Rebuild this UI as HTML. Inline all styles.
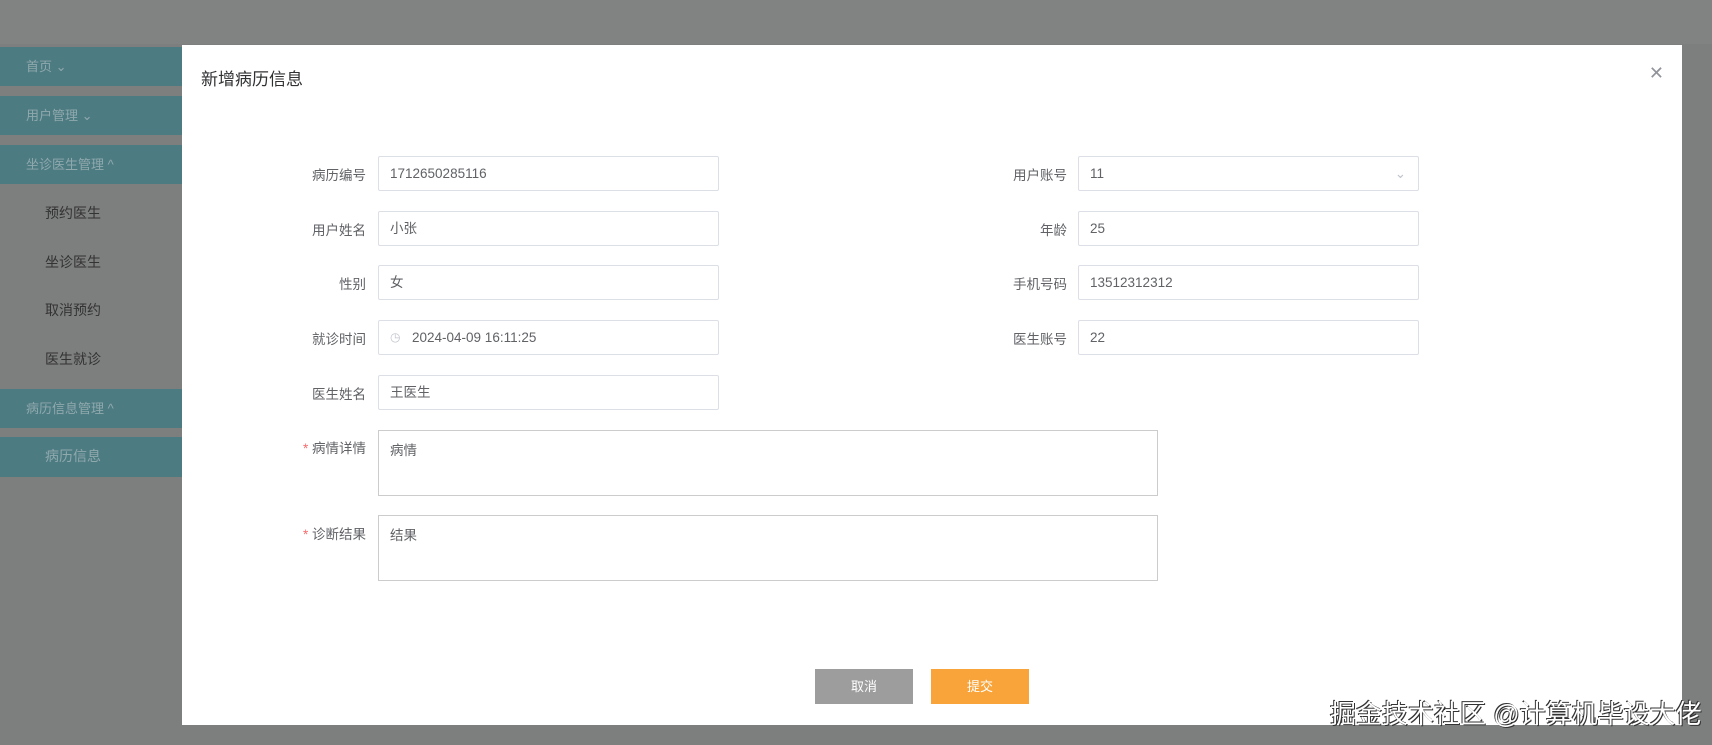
<!DOCTYPE html>
<html><head><meta charset="utf-8"><style>
*{box-sizing:border-box;margin:0;padding:0}
body{width:1712px;height:745px;overflow:hidden;background:#7d7e7e;font-family:"Liberation Sans","Noto Sans CJK SC",sans-serif;position:relative}
.top{position:absolute;left:0;top:0;width:1712px;height:44px;background:#818282}
.sb{position:absolute;left:0;top:44px;width:190px;height:701px;background:#7d7e7e}
.hd{position:absolute;left:0;width:190px;height:39px;background:#4d7b82;color:#8fa9ad;font-size:13px;line-height:39px;padding-left:26px}
.it{position:absolute;left:45px;color:#333;font-size:14px}
.modal{position:absolute;left:182px;top:45px;width:1500px;height:680px;background:#fff}
.title{position:absolute;left:19px;top:20px;font-size:17px;color:#303133}
.x{position:absolute;right:18px;top:18px;font-size:18px;color:#909399}
.lb{position:absolute;font-size:13.5px;color:#606266;text-align:right;width:120px}
.in{position:absolute;width:341px;height:35px;border:1px solid #dcdfe6;border-radius:2px;font-size:13.5px;color:#606266;padding-left:11px;line-height:33px}
.ta{position:absolute;left:196px;width:780px;height:66px;border:1px solid #ccc;font-size:13.5px;color:#606266;padding:8px 11px}
.btn{position:absolute;top:624px;width:98px;height:35px;color:#fff;font-size:13px;text-align:center;line-height:35px}
.wm{position:absolute;left:1330px;top:694px;font-size:26px;color:#fff;text-shadow:1px 1px 0 #333,-1px -1px 0 #333;white-space:nowrap}
</style></head><body>
<div class="top"></div>
<div class="sb">
<div class="hd" style="top:3px">首页 ⌄</div>
<div class="hd" style="top:52px">用户管理 ⌄</div>
<div class="hd" style="top:101px">坐诊医生管理 ^</div>
<div class="it" style="top:159px">预约医生</div>
<div class="it" style="top:208px">坐诊医生</div>
<div class="it" style="top:256px">取消预约</div>
<div class="it" style="top:305px">医生就诊</div>
<div class="hd" style="top:345px">病历信息管理 ^</div>
<div class="hd" style="top:393px;padding-left:45px;font-size:14px;height:40px">病历信息</div>
</div>
<div class="modal">
<div class="title">新增病历信息</div>
<div class="x">✕</div>
<div class="lb" style="left:64px;top:119px">病历编号</div><div class="in" style="left:196px;top:111px">1712650285116</div>
<div class="lb" style="left:64px;top:174px">用户姓名</div><div class="in" style="left:196px;top:166px">小张</div>
<div class="lb" style="left:64px;top:228px">性别</div><div class="in" style="left:196px;top:220px">女</div>
<div class="lb" style="left:64px;top:283px">就诊时间</div><div class="in" style="left:196px;top:275px;padding-left:33px;color:#606266">2024-04-09 16:11:25<span style="position:absolute;left:11px;color:#c0c4cc;font-size:12px">◷</span></div>
<div class="lb" style="left:64px;top:338px">医生姓名</div><div class="in" style="left:196px;top:330px">王医生</div>
<div class="lb" style="left:765px;top:119px">用户账号</div><div class="in" style="left:896px;top:111px">11<span style="position:absolute;right:12px;color:#c0c4cc">⌄</span></div>
<div class="lb" style="left:765px;top:174px">年龄</div><div class="in" style="left:896px;top:166px">25</div>
<div class="lb" style="left:765px;top:228px">手机号码</div><div class="in" style="left:896px;top:220px">13512312312</div>
<div class="lb" style="left:765px;top:283px">医生账号</div><div class="in" style="left:896px;top:275px">22</div>
<div class="lb" style="left:64px;top:392px"><span style="color:#f56c6c">* </span>病情详情</div><div class="ta" style="top:385px">病情</div>
<div class="lb" style="left:64px;top:478px"><span style="color:#f56c6c">* </span>诊断结果</div><div class="ta" style="top:470px">结果</div>
<div class="btn" style="left:633px;background:#9d9d9d">取消</div>
<div class="btn" style="left:749px;background:#f9a43a">提交</div>
</div>
<div class="wm">掘金技术社区 @计算机毕设大佬</div>
</body></html>
